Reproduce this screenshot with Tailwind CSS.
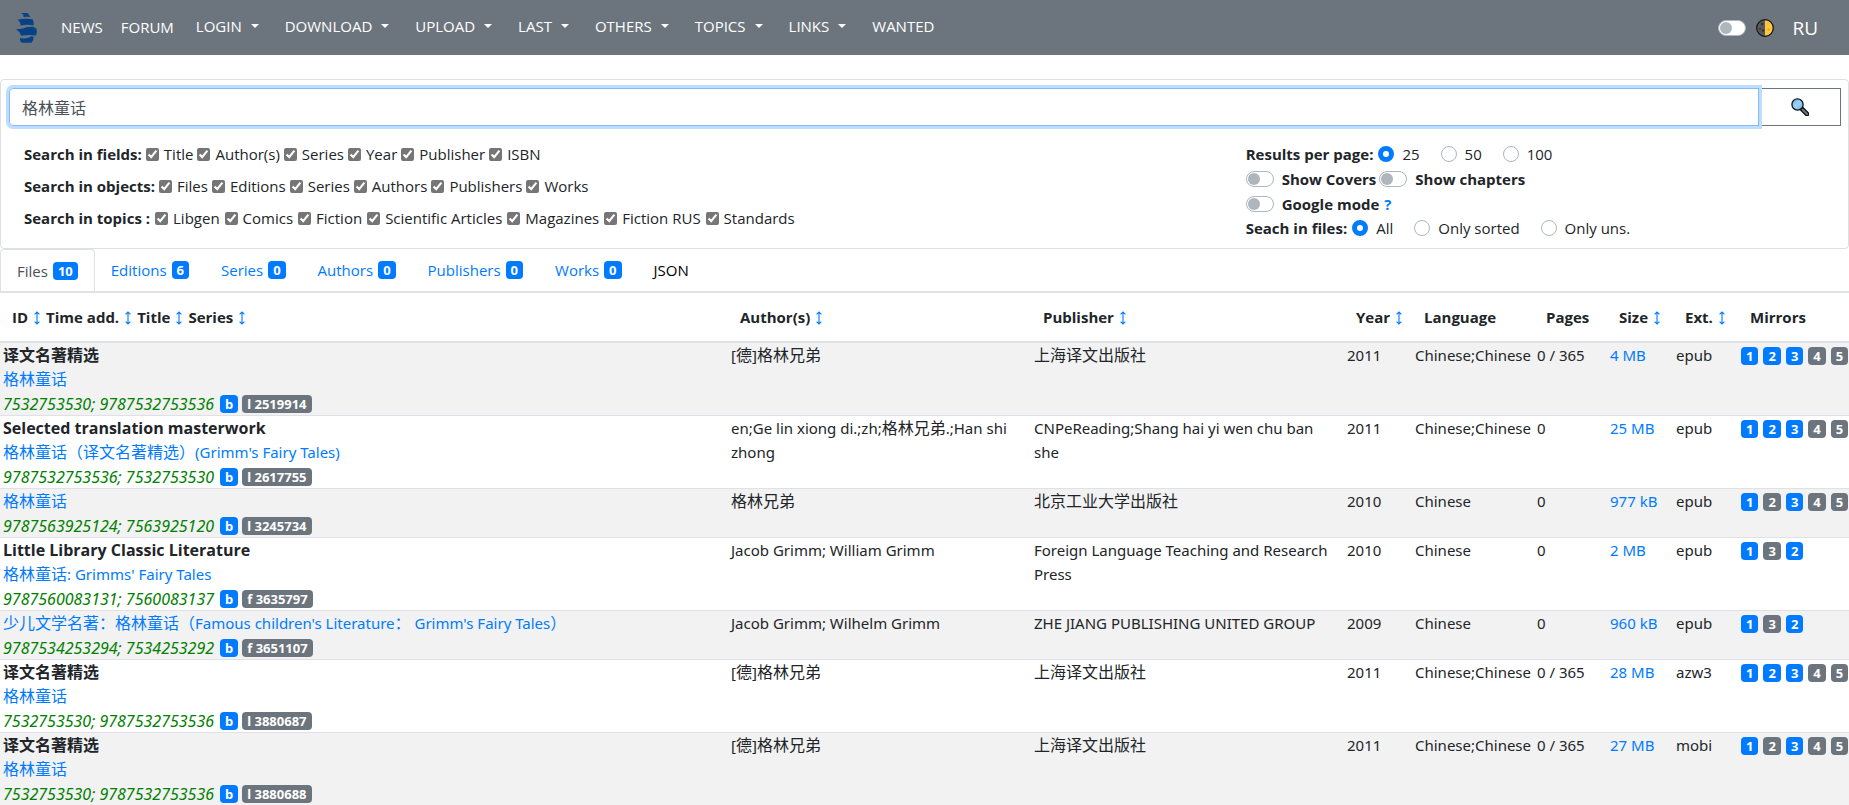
<!DOCTYPE html>
<html lang="en">
<head>
<meta charset="utf-8">
<meta name="viewport" content="width=device-width, initial-scale=1">
<title>Library search</title>
<script src="https://cdn.jsdelivr.net/npm/@tailwindcss/browser@4"></script>
</head>
<body class="bg-white text-[#212529] text-[15px] leading-6 font-['Open_Sans','Noto_Sans_CJK_SC',sans-serif]">

<svg class="hidden" aria-hidden="true">
  <symbol id="sort" viewBox="0 0 6 14"><path d="M3 1v12M.6 3.400 3 1 5.400 3.400M.6 10.600 3 13 5.400 10.600" fill="none" stroke="currentColor" stroke-width="1.100"/></symbol>
  <symbol id="caret" viewBox="0 0 8 4"><path d="M0 0h8L4 4z" fill="currentColor"/></symbol>
</svg>

<header class="flex items-center h-[55px] bg-[#6c757d] text-white pl-4 pr-[31px]">
  <a href="#" aria-label="Home" class="mr-[23px]">
    <svg class="w-[22px] h-[30px]" viewBox="0 0 22 30" fill="#074287">
      <path d="M5 0h6.500l3 4q-3-.7-7 0Q8 1.500 5 0z"/>
      <path d="M1.500 6.800q7-1.800 15-.5 2 3 1 6.200-6-1.500-13 0Q5 9.500 1.500 6.800z"/>
      <path d="M0 16.500q3.500-.5 7-1 4-2.200 11-1.500l2.500 2q1 3-.5 6.500-7-1.300-15 .3Q4 18.500 0 16.500z"/>
      <path d="M4 25q4 .8 7.500 0l4-1.800 2 .3q.5 3.700-2 6.200H6Q3.500 28.500 4 25z"/>
    </svg>
  </a>
  <nav class="flex items-center gap-[26px] pb-1">
    <div class="flex gap-[18px] -mr-1 pt-0.5"><a href="#">NEWS</a><a href="#">FORUM</a></div>
    <button class="flex items-center gap-[9px]">LOGIN<svg class="w-2 h-1"><use href="#caret"/></svg></button>
    <button class="flex items-center gap-[9px]">DOWNLOAD<svg class="w-2 h-1"><use href="#caret"/></svg></button>
    <button class="flex items-center gap-[9px]">UPLOAD<svg class="w-2 h-1"><use href="#caret"/></svg></button>
    <button class="flex items-center gap-[9px]">LAST<svg class="w-2 h-1"><use href="#caret"/></svg></button>
    <button class="flex items-center gap-[9px]">OTHERS<svg class="w-2 h-1"><use href="#caret"/></svg></button>
    <button class="flex items-center gap-[9px]">TOPICS<svg class="w-2 h-1"><use href="#caret"/></svg></button>
    <button class="flex items-center gap-[9px]">LINKS<svg class="w-2 h-1"><use href="#caret"/></svg></button>
    <a href="#">WANTED</a>
  </nav>
  <div class="ml-auto flex items-center">
    <label class="flex items-center gap-2.5">
      <input type="checkbox" aria-label="Dark mode" class="appearance-none w-7 h-4 rounded-full border border-[#adb5bd] bg-white p-px before:block before:size-3 before:rounded-full before:bg-[#adb5bd]">
      <svg class="size-[18px]" viewBox="0 0 18 18">
        <circle cx="9" cy="9" r="8" fill="#5a5a5a"/>
        <path d="M9 1a8 8 0 0 1 0 16z" fill="#ffc83d"/>
        <circle cx="6" cy="5" r="1.300" fill="#333"/><circle cx="4" cy="10" r="1" fill="#333"/><circle cx="7" cy="11.500" r="1.300" fill="#333"/>
        <circle cx="12.500" cy="10.500" r="1.200" fill="#e8a51e"/><circle cx="12" cy="5" r=".7" fill="#e8a51e"/>
        <circle cx="9" cy="9" r="8.300" fill="none" stroke="#111" stroke-width="1.200"/>
      </svg>
    </label>
    <a href="#" class="ml-[18px] text-[19px]">RU</a>
  </div>
</header>

<main class="pt-6">
  <form class="border border-[#dfdfdf] rounded p-2 pb-[14px]">
    <div class="flex">
      <input type="text" aria-label="Search" value="格林童话" class="relative z-10 grow h-[38px] rounded-l border border-[#80bdff] ring-3 ring-[#bfdeff] px-3 text-base text-[#495057] outline-none">
      <button type="button" aria-label="Search" class="-ml-px -mr-px flex items-center justify-center w-[83px] h-[38px] border border-[#6c757d]">
        <svg class="size-[18px]" viewBox="0 0 18 18">
          <path d="M10.500 10.500 16 16" stroke="#111" stroke-width="4.600" stroke-linecap="round"/>
          <path d="M11.500 11.500 16 16" stroke="#6b7780" stroke-width="2" stroke-linecap="round"/>
          <circle cx="6.500" cy="6.500" r="5.600" fill="#83c5f5" stroke="#111" stroke-width="1.300"/>
          <path d="M3 8.500 8.500 3M4.500 10 10 4.500" stroke="#c3e3fa" stroke-width="1"/>
        </svg>
      </button>
    </div>
    <div class="flex items-start mt-3">
      <div class="w-2/3 pl-[15px]">
        <fieldset class="flex items-center gap-1 h-8"><b>Search in fields:</b>
          <label class="flex items-center gap-[5px]"><input type="checkbox" checked class="size-[13px] accent-[#767676]">Title</label>
          <label class="flex items-center gap-[5px]"><input type="checkbox" checked class="size-[13px] accent-[#767676]">Author(s)</label>
          <label class="flex items-center gap-[5px]"><input type="checkbox" checked class="size-[13px] accent-[#767676]">Series</label>
          <label class="flex items-center gap-[5px]"><input type="checkbox" checked class="size-[13px] accent-[#767676]">Year</label>
          <label class="flex items-center gap-[5px]"><input type="checkbox" checked class="size-[13px] accent-[#767676]">Publisher</label>
          <label class="flex items-center gap-[5px]"><input type="checkbox" checked class="size-[13px] accent-[#767676]">ISBN</label>
        </fieldset>
        <fieldset class="flex items-center gap-1 h-8"><b>Search in objects:</b>
          <label class="flex items-center gap-[5px]"><input type="checkbox" checked class="size-[13px] accent-[#767676]">Files</label>
          <label class="flex items-center gap-[5px]"><input type="checkbox" checked class="size-[13px] accent-[#767676]">Editions</label>
          <label class="flex items-center gap-[5px]"><input type="checkbox" checked class="size-[13px] accent-[#767676]">Series</label>
          <label class="flex items-center gap-[5px]"><input type="checkbox" checked class="size-[13px] accent-[#767676]">Authors</label>
          <label class="flex items-center gap-[5px]"><input type="checkbox" checked class="size-[13px] accent-[#767676]">Publishers</label>
          <label class="flex items-center gap-[5px]"><input type="checkbox" checked class="size-[13px] accent-[#767676]">Works</label>
        </fieldset>
        <fieldset class="flex items-center gap-[5px] h-8"><b>Search in topics :</b>
          <label class="flex items-center gap-[5px]"><input type="checkbox" checked class="size-[13px] accent-[#767676]">Libgen</label>
          <label class="flex items-center gap-[5px]"><input type="checkbox" checked class="size-[13px] accent-[#767676]">Comics</label>
          <label class="flex items-center gap-[5px]"><input type="checkbox" checked class="size-[13px] accent-[#767676]">Fiction</label>
          <label class="flex items-center gap-[5px]"><input type="checkbox" checked class="size-[13px] accent-[#767676]">Scientific Articles</label>
          <label class="flex items-center gap-[5px]"><input type="checkbox" checked class="size-[13px] accent-[#767676]">Magazines</label>
          <label class="flex items-center gap-[5px]"><input type="checkbox" checked class="size-[13px] accent-[#767676]">Fiction RUS</label>
          <label class="flex items-center gap-[5px]"><input type="checkbox" checked class="size-[13px] accent-[#767676]">Standards</label>
        </fieldset>
      </div>
      <div class="grow pl-4 pt-[3px] -mb-[7px]">
        <fieldset class="flex items-center h-[25px] gap-[21px]">
          <div class="flex items-center gap-[5px]"><b>Results per page:</b><label class="flex items-center gap-2"><input type="radio" name="res" checked class="appearance-none size-4 rounded-full border border-[#adb5bd] checked:border-5 checked:border-[#007bff]">25</label></div>
          <label class="flex items-center gap-2"><input type="radio" name="res" class="appearance-none size-4 rounded-full border border-[#adb5bd] checked:border-5 checked:border-[#007bff]">50</label>
          <label class="flex items-center gap-2"><input type="radio" name="res" class="appearance-none size-4 rounded-full border border-[#adb5bd] checked:border-5 checked:border-[#007bff]">100</label>
        </fieldset>
        <div class="flex items-center h-[25px] gap-[3px] font-bold">
          <label class="flex items-center gap-2"><input type="checkbox" class="appearance-none w-7 h-4 rounded-full border border-[#adb5bd] bg-white p-px before:block before:size-3 before:rounded-full before:bg-[#adb5bd]">Show Covers</label>
          <label class="flex items-center gap-2"><input type="checkbox" class="appearance-none w-7 h-4 rounded-full border border-[#adb5bd] bg-white p-px before:block before:size-3 before:rounded-full before:bg-[#adb5bd]">Show chapters</label>
        </div>
        <div class="flex items-center h-[25px] gap-[5px] font-bold">
          <label class="flex items-center gap-2"><input type="checkbox" class="appearance-none w-7 h-4 rounded-full border border-[#adb5bd] bg-white p-px before:block before:size-3 before:rounded-full before:bg-[#adb5bd]">Google mode</label>
          <a href="#" class="text-[#007bff]">?</a>
        </div>
        <fieldset class="flex items-center h-6 gap-[21px]">
          <div class="flex items-center gap-[5px]"><b>Seach in files:</b><label class="flex items-center gap-2"><input type="radio" name="scope" checked class="appearance-none size-4 rounded-full border border-[#adb5bd] checked:border-5 checked:border-[#007bff]">All</label></div>
          <label class="flex items-center gap-2"><input type="radio" name="scope" class="appearance-none size-4 rounded-full border border-[#adb5bd] checked:border-5 checked:border-[#007bff]">Only sorted</label>
          <label class="flex items-center gap-2"><input type="radio" name="scope" class="appearance-none size-4 rounded-full border border-[#adb5bd] checked:border-5 checked:border-[#007bff]">Only uns.</label>
        </fieldset>
      </div>
    </div>
  </form>

  <nav class="flex h-[42px] text-[#007bff]">
    <a href="#" class="flex items-center gap-[5px] px-4 border border-b-0 border-[#dee2e6] rounded-t text-[#495057]">Files <span class="rounded bg-[#007bff] text-white text-[13px] leading-[18px] font-bold px-[5px]">10</span></a>
    <a href="#" class="flex items-center gap-[5px] px-4">Editions <span class="rounded bg-[#007bff] text-white text-[13px] leading-[18px] font-bold px-[5px]">6</span></a>
    <a href="#" class="flex items-center gap-[5px] px-4">Series <span class="rounded bg-[#007bff] text-white text-[13px] leading-[18px] font-bold px-[5px]">0</span></a>
    <a href="#" class="flex items-center gap-[5px] px-4">Authors <span class="rounded bg-[#007bff] text-white text-[13px] leading-[18px] font-bold px-[5px]">0</span></a>
    <a href="#" class="flex items-center gap-[5px] px-4">Publishers <span class="rounded bg-[#007bff] text-white text-[13px] leading-[18px] font-bold px-[5px]">0</span></a>
    <a href="#" class="flex items-center gap-[5px] px-4">Works <span class="rounded bg-[#007bff] text-white text-[13px] leading-[18px] font-bold px-[5px]">0</span></a>
    <a href="#" class="flex items-center px-4 text-black">JSON</a>
  </nav>

  <table class="w-full table-fixed border-collapse text-left">
    <colgroup>
      <col><col class="w-[303px]"><col class="w-[313px]"><col class="w-[68px]"><col class="w-[122px]"><col class="w-[73px]"><col class="w-[66px]"><col class="w-[65px]"><col class="w-[111px]">
    </colgroup>
    <thead class="border-y-2 border-[#dee2e6]">
      <tr class="whitespace-nowrap">
        <th class="py-3 px-3"><div class="flex items-center gap-[6px]">ID <a href="#" aria-label="Sort by ID" class="text-[#007bff] pt-0.5"><svg class="w-[6px] h-[14px]"><use href="#sort"/></svg></a> Time add. <a href="#" aria-label="Sort by time" class="text-[#007bff] pt-0.5"><svg class="w-[6px] h-[14px]"><use href="#sort"/></svg></a> Title <a href="#" aria-label="Sort by title" class="text-[#007bff] pt-0.5"><svg class="w-[6px] h-[14px]"><use href="#sort"/></svg></a> Series <a href="#" aria-label="Sort by series" class="text-[#007bff] pt-0.5"><svg class="w-[6px] h-[14px]"><use href="#sort"/></svg></a></div></th>
        <th class="py-3 px-3"><div class="flex items-center gap-[6px]">Author(s) <a href="#" aria-label="Sort by author" class="text-[#007bff] pt-0.5"><svg class="w-[6px] h-[14px]"><use href="#sort"/></svg></a></div></th>
        <th class="py-3 px-3"><div class="flex items-center gap-[6px]">Publisher <a href="#" aria-label="Sort by publisher" class="text-[#007bff] pt-0.5"><svg class="w-[6px] h-[14px]"><use href="#sort"/></svg></a></div></th>
        <th class="py-3 px-3"><div class="flex items-center gap-[6px]">Year <a href="#" aria-label="Sort by year" class="text-[#007bff] pt-0.5"><svg class="w-[6px] h-[14px]"><use href="#sort"/></svg></a></div></th>
        <th class="py-3 px-3">Language</th>
        <th class="py-3 px-3">Pages</th>
        <th class="py-3 px-3"><div class="flex items-center gap-[6px]">Size <a href="#" aria-label="Sort by size" class="text-[#007bff] pt-0.5"><svg class="w-[6px] h-[14px]"><use href="#sort"/></svg></a></div></th>
        <th class="py-3 px-3"><div class="flex items-center gap-[6px]">Ext. <a href="#" aria-label="Sort by extension" class="text-[#007bff] pt-0.5"><svg class="w-[6px] h-[14px]"><use href="#sort"/></svg></a></div></th>
        <th class="py-3 px-3">Mirrors</th>
      </tr>
    </thead>
    <tbody id="rows" class="font-['Noto_Sans','Noto_Sans_CJK_SC',sans-serif]"></tbody>
  </table>
</main>

<script>
// series, title, isbn, id, author, publisher, year, language, pages, size, extension, mirrors (+ marks a blue one)
const files = [
  ["译文名著精选", "格林童话", "7532753530; 9787532753536", "l 2519914", "[德]格林兄弟", "上海译文出版社", "2011", "Chinese;Chinese", "0 / 365", "4 MB", "epub", "+1 +2 +3 4 5"],
  ["Selected translation masterwork", "格林童话（译文名著精选）(Grimm's Fairy Tales)", "9787532753536; 7532753530", "l 2617755", "en;Ge lin xiong di.;zh;格林兄弟.;Han shi zhong", "CNPeReading;Shang hai yi wen chu ban she", "2011", "Chinese;Chinese", "0", "25 MB", "epub", "+1 +2 +3 4 5"],
  ["", "格林童话", "9787563925124; 7563925120", "l 3245734", "格林兄弟", "北京工业大学出版社", "2010", "Chinese", "0", "977 kB", "epub", "+1 2 +3 4 5"],
  ["Little Library Classic Literature", "格林童话: Grimms' Fairy Tales", "9787560083131; 7560083137", "f 3635797", "Jacob Grimm; William Grimm", "Foreign Language Teaching and Research Press", "2010", "Chinese", "0", "2 MB", "epub", "+1 3 +2"],
  ["", "少儿文学名著：格林童话（Famous children's Literature： Grimm's Fairy Tales）", "9787534253294; 7534253292", "f 3651107", "Jacob Grimm; Wilhelm Grimm", "ZHE JIANG PUBLISHING UNITED GROUP", "2009", "Chinese", "0", "960 kB", "epub", "+1 3 +2"],
  ["译文名著精选", "格林童话", "7532753530; 9787532753536", "l 3880687", "[德]格林兄弟", "上海译文出版社", "2011", "Chinese;Chinese", "0 / 365", "28 MB", "azw3", "+1 +2 +3 4 5"],
  ["译文名著精选", "格林童话", "7532753530; 9787532753536", "l 3880688", "[德]格林兄弟", "上海译文出版社", "2011", "Chinese;Chinese", "0 / 365", "27 MB", "mobi", "+1 2 +3 4 5"],
];
// Chinese runs are set one pixel larger than the Latin text around them
const han = s => s.replace(/[\u3000-\u9fff\uff00-\uffef]+/g, m => `<span lang="zh" class="text-base leading-none">${m}</span>`);
const blue = t => `<a href="#" class="rounded bg-[#007bff] text-white text-[13px] leading-[18px] font-bold px-[5px]">${t}</a>`;
const gray = t => `<a href="#" class="rounded bg-[#6c757d] text-white text-[13px] leading-[18px] font-bold px-[5px]">${t}</a>`;
document.getElementById("rows").innerHTML = files.map(([series, title, isbn, id, author, publisher, year, lang, pages, size, ext, mirrors]) => `
  <tr class="align-top border-b border-[#dee2e6] last:border-b-0 odd:bg-[#f2f2f2]">
    <td class="px-[3px]">
      ${series ? `<div class="h-6 text-base leading-6 font-bold font-['Open_Sans','Noto_Sans_CJK_SC',sans-serif]">${series}</div>` : ""}
      <div class="h-6"><a href="#" class="text-[#007bff]">${han(title)}</a></div>
      <div class="flex items-center gap-1 h-6 pt-0.5"><i class="min-w-[213px] text-base leading-6 text-[#008000]">${isbn}</i>${blue("b")}${gray(id)}</div>
    </td>
    <td class="px-[3px]">${han(author)}</td>
    <td class="px-[3px]">${han(publisher)}</td>
    <td class="px-[3px]">${year}</td>
    <td class="px-[3px] whitespace-nowrap">${lang}</td>
    <td class="px-[3px] whitespace-nowrap">${pages}</td>
    <td class="px-[3px] whitespace-nowrap"><a href="#" class="text-[#007bff]">${size}</a></td>
    <td class="px-[3px]">${ext}</td>
    <td class="px-[3px]"><div class="flex items-center gap-[5px] h-6 pt-0.5">${mirrors.split(" ").map(m => m[0] === "+" ? blue(m.slice(1)) : gray(m)).join("")}</div></td>
  </tr>`).join("");
</script>
</body>
</html>
